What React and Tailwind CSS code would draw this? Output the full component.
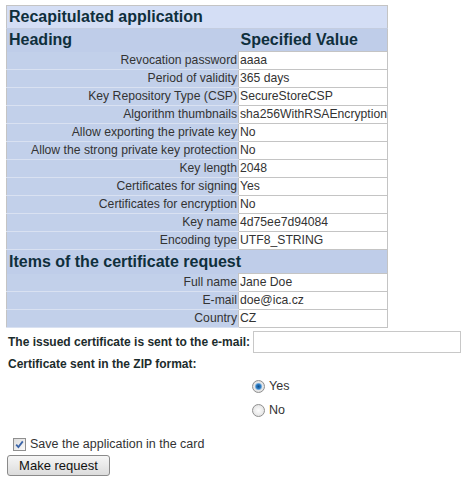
export default function App() {
  const rows1 = [
    ["Revocation password", "aaaa"],
    ["Period of validity", "365 days"],
    ["Key Repository Type (CSP)", "SecureStoreCSP"],
    ["Algorithm thumbnails", "sha256WithRSAEncryption"],
    ["Allow exporting the private key", "No"],
    ["Allow the strong private key protection", "No"],
    ["Key length", "2048"],
    ["Certificates for signing", "Yes"],
    ["Certificates for encryption", "No"],
    ["Key name", "4d75ee7d94084"],
    ["Encoding type", "UTF8_STRING"],
  ];
  const rows2 = [
    ["Full name", "Jane Doe"],
    ["E-mail", "doe@ica.cz"],
    ["Country", "CZ"],
  ];
  const Row = ({ l, v }) => (
    <tr className="h-[18px]">
      <td className="bg-[#c2d0ea] text-right pr-[1px] border-b border-[#d9e1f1] leading-[17px] text-[12.2px]">{l}</td>
      <td className="bg-white pl-[1px] border border-[#c4c4c4] leading-[17px] text-[12.2px]">{v}</td>
    </tr>
  );
  const radio =
    "appearance-none w-[13px] h-[13px] m-0 rounded-full border border-[#8f8f8f] bg-[radial-gradient(circle,#fdfdfd_0,#dcdcdc_100%)] checked:bg-[radial-gradient(circle,#0f4c86_0,#2f7fc6_30%,#7fb1dd_40%,#e8e8e8_52%,#d6d6d6_100%)]";
  return (
    <div className="bg-white w-[473px] h-[484px] text-[#333] text-[12px]" style={{ fontFamily: '"Liberation Sans", Arial, sans-serif' }}>
      <div className="pt-[5px] pl-[6px]">
        <table className="border-collapse border border-[#c4c4c4] w-[382px]">
          <tbody>
            <tr className="h-[23px]">
              <td colSpan={2} className="bg-[#d4def5] text-[#0f2f3c] font-bold text-[16px] pl-[2px] leading-[22px] border-b border-[#c4cde0]">Recapitulated application</td>
            </tr>
            <tr className="h-[23px]">
              <td className="bg-[#bfcde9] text-[#0f2f3c] font-bold text-[16px] pl-[2px] leading-[22px] w-[232px]">Heading</td>
              <td className="bg-[#bfcde9] text-[#0f2f3c] font-bold text-[16px] pl-[2px] leading-[22px]">Specified Value</td>
            </tr>
            {rows1.map(([l, v]) => <Row key={l} l={l} v={v} />)}
            <tr className="h-[24px]">
              <td colSpan={2} className="bg-[#bfcde9] text-[#0f2f3c] font-bold text-[16px] pl-[2px] leading-[23px]">Items of the certificate request</td>
            </tr>
            {rows2.map(([l, v]) => <Row key={l} l={l} v={v} />)}
          </tbody>
        </table>
        <div className="flex items-center mt-[3px] h-[22px]">
          <span className="font-bold text-[#1c2c2c] ml-[2px]">The issued certificate is sent to the e-mail:</span>
          <input type="text" className="ml-[3px] w-[208px] h-[22px] border border-[#c8c8c8] bg-white outline-none" />
        </div>
        <div className="font-bold text-[#1c2c2c] ml-[2px] mt-[4px] leading-[14px]">Certificate sent in the ZIP format:</div>
        <div className="ml-[246px] mt-[8px] flex flex-col gap-[10px]">
          <label className="flex items-center gap-[4px] h-[14px]">
            <input type="radio" name="zip" defaultChecked className={radio} />
            <span className="text-[12.5px]">Yes</span>
          </label>
          <label className="flex items-center gap-[4px] h-[14px]">
            <input type="radio" name="zip" className={radio} />
            <span className="text-[12.5px]">No</span>
          </label>
        </div>
        <label className="flex items-center gap-[4px] mt-[20px] ml-[7px] h-[14px]">
          <span className="relative w-[13px] h-[13px] border border-[#8f8f8f] bg-gradient-to-br from-[#dcdcdc] to-[#fafafa] flex items-center justify-center">
            <svg viewBox="0 0 11 11" className="absolute inset-0 w-[11px] h-[11px]">
              <path d="M2.2 5.6 L4.4 8 L8.8 2.4" fill="none" stroke="#3b64a8" strokeWidth="1.8" />
            </svg>
          </span>
          <span className="text-[12.5px]">Save the application in the card</span>
        </label>
        <button className="mt-[4px] ml-[1px] h-[21px] w-[103px] border border-[#8a8a8a] rounded-[3px] bg-gradient-to-b from-[#f6f6f6] to-[#dcdcdc] text-[13px] text-[#111] leading-[19px]">Make request</button>
      </div>
    </div>
  );
}
